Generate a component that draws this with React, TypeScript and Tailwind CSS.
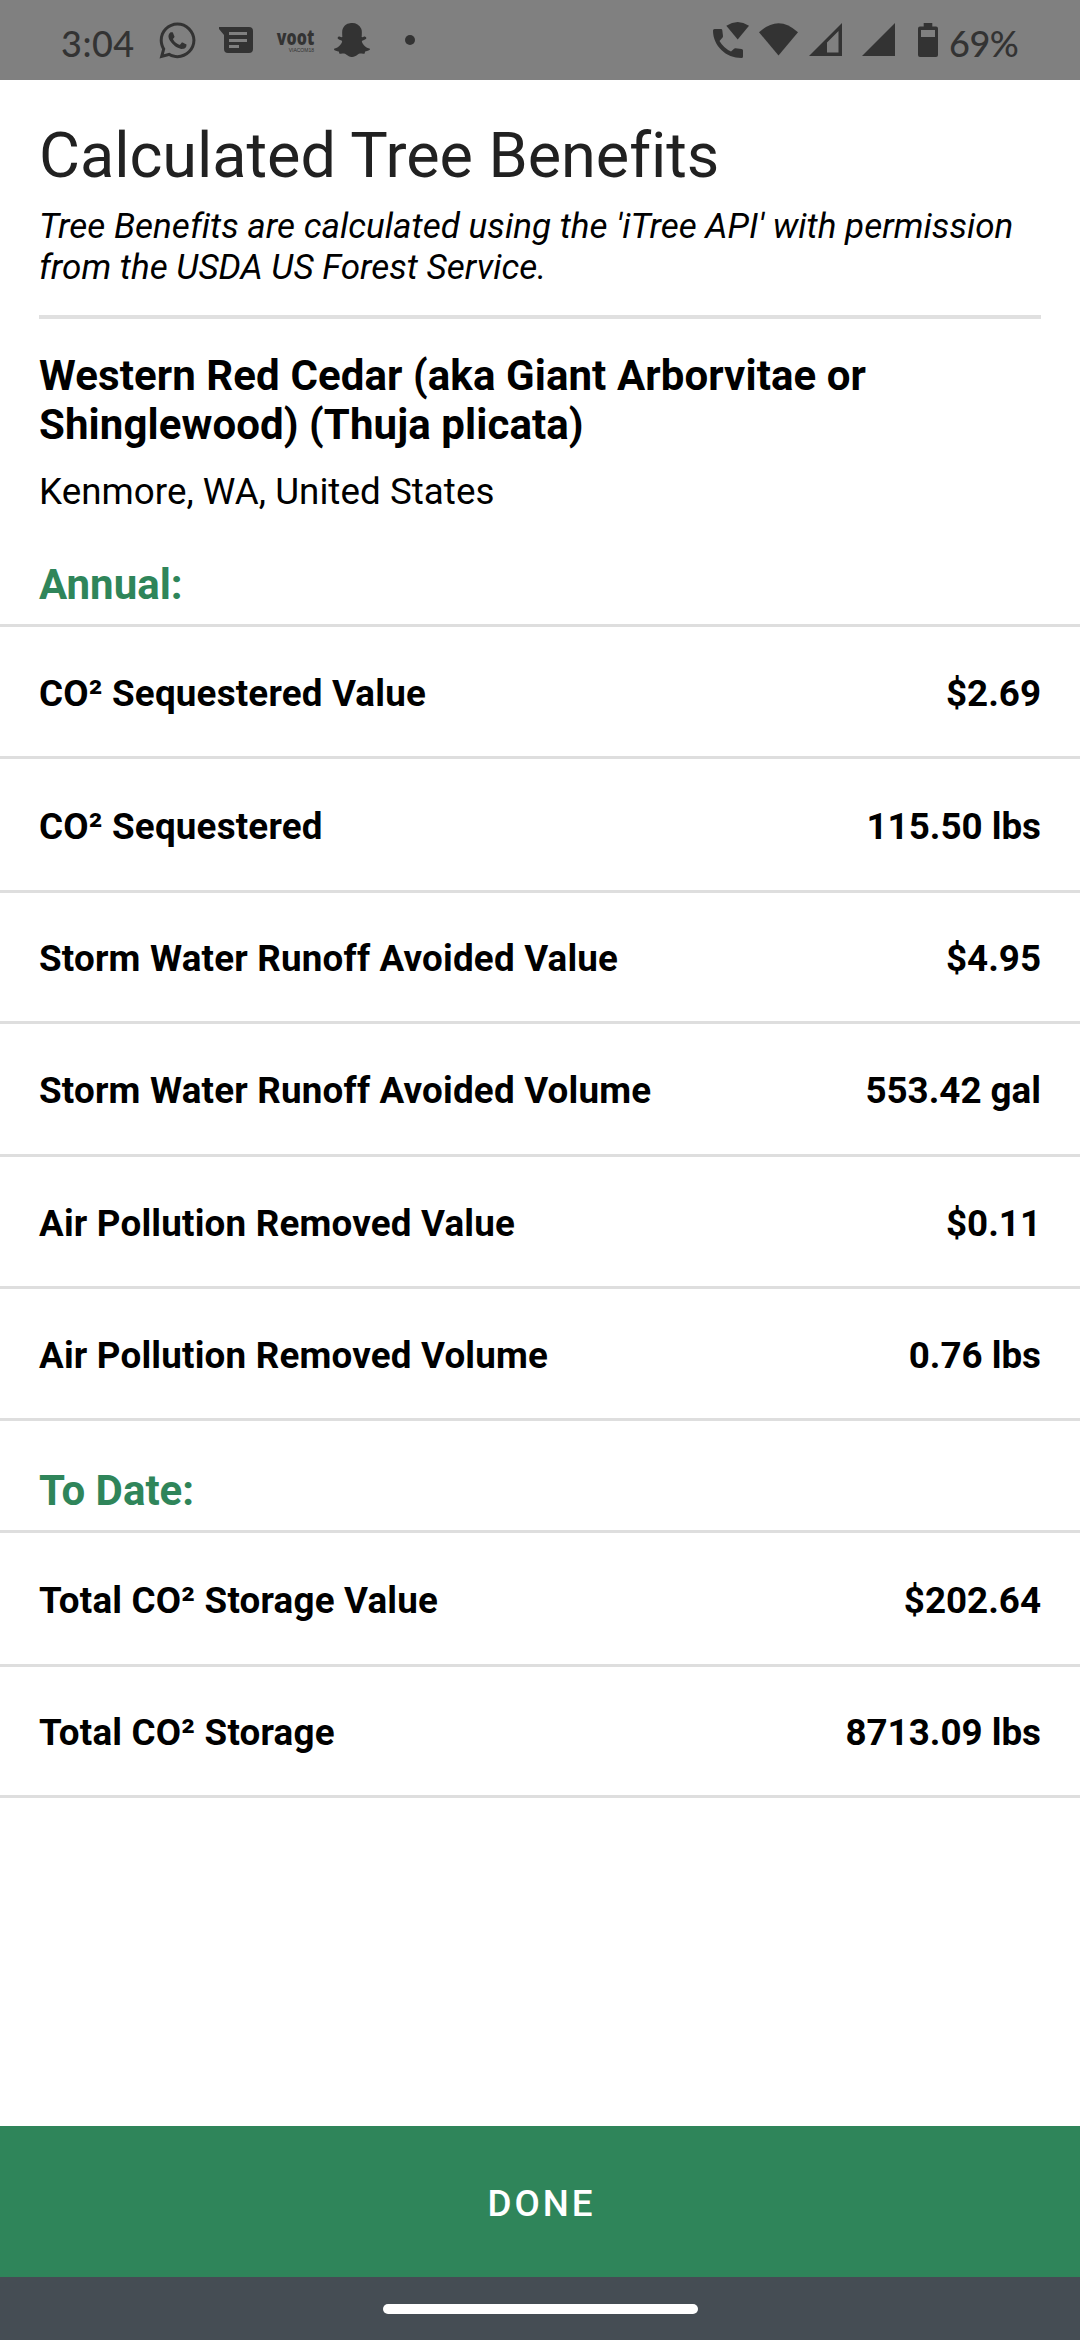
import { FaWhatsapp, FaSnapchatGhost } from "react-icons/fa";

type Row = { label: string; value: string; size: string };

const annual: Row[] = [
  { label: "CO² Sequestered Value", value: "$2.69", size: "h-[132px] pt-1" },
  { label: "CO² Sequestered", value: "115.50 lbs", size: "h-[134px] pt-1" },
  { label: "Storm Water Runoff Avoided Value", value: "$4.95", size: "h-[131px] pt-[3px]" },
  { label: "Storm Water Runoff Avoided Volume", value: "553.42 gal", size: "h-[133px] pt-[3px]" },
  { label: "Air Pollution Removed Value", value: "$0.11", size: "h-[132px] pt-1" },
  { label: "Air Pollution Removed Volume", value: "0.76 lbs", size: "h-[132px] pt-1" },
];

const toDate: Row[] = [
  { label: "Total CO² Storage Value", value: "$202.64", size: "h-[134px] pt-1" },
  { label: "Total CO² Storage", value: "8713.09 lbs", size: "h-[131px] pt-[3px]" },
];

function StatusBar() {
  return (
    <header className="flex h-20 shrink-0 items-center bg-[#808080] text-[#333333]">
      <span className="ml-[61px] w-[76px] pt-[5px] font-['Lato'] text-[36px] leading-none font-medium tracking-[0.5px] whitespace-nowrap">3:04</span>
      <FaWhatsapp className="ml-5 size-[41px]" />
      <svg className="ml-[21px] h-[27px] w-[34px]" viewBox="0 0 34 27" fill="currentColor">
        <path fillRule="evenodd" d="M0 0H30a4 4 0 0 1 4 4V22a4 4 0 0 1-4 4H9a4 4 0 0 1-4-4V8L0 2ZM10 5V8H28V5ZM10 12V15H28V12ZM10 18V21H20V18Z" />
      </svg>
      <div className="ml-[21px] flex w-10 flex-col items-end">
        <span className="inline-block origin-right scale-x-[0.76] font-['Open_Sans'] text-[21px] leading-[21px] font-extrabold">voot</span>
        <span className="font-['Liberation_Sans'] text-[5px] leading-[5px] whitespace-nowrap">VIACOM18</span>
      </div>
      <FaSnapchatGhost className="ml-5 size-9" />
      <span className="ml-[35px] size-2.5 rounded-full bg-[#333333]" />
      <div className="mr-[61px] ml-auto flex items-center">
        <svg className="h-9 w-9" viewBox="0 0 36 36" fill="currentColor">
          <path d="M1.5 7H8q1.200 0 1.300 1.200L10 14q.1 1-.6 1.700L6.500 19Q10.500 26 18 29.500L20.800 27q.7-.8 1.700-.7l6 .7q1.500.2 1.500 1.600V34.500q0 1.500-1.500 1.500C13 36 0 24 0 8.500Q0 7 1.500 7Z" />
          <path d="M13.300 3.700Q24.700-3.700 36 3.700L24.700 17.500Z" />
        </svg>
        <svg className="ml-2.5 h-9 w-[39px]" viewBox="0 0 39 36" fill="currentColor">
          <path d="M0 10.300Q19.500-8 39 10.300L19.500 33.500Z" />
        </svg>
        <svg className="ml-[11px] h-9 w-[33px]" viewBox="0 0 33 36" fill="currentColor">
          <path fillRule="evenodd" d="M0 34L33 1V34ZM18 20.500V30.500H29.500V9Z" />
        </svg>
        <svg className="ml-5 h-9 w-[33px]" viewBox="0 0 33 36" fill="currentColor">
          <path d="M0 34L33 1V34Z" />
        </svg>
        <svg className="ml-[23px] h-9 w-5" viewBox="0 0 20 36" fill="currentColor">
          <path fillRule="evenodd" d="M5.700 1H14.300V4.500H18a2 2 0 0 1 2 2V33a2 2 0 0 1-2 2H2a2 2 0 0 1-2-2V6.500a2 2 0 0 1 2-2H5.700ZM3 8V15H17V8Z" />
        </svg>
        <span className="ml-[11px] w-[70px] pt-[5px] font-['Lato'] text-[36px] leading-none font-medium tracking-[-0.5px] whitespace-nowrap">69%</span>
      </div>
    </header>
  );
}

function Section({ title, rows }: { title: string; rows: Row[] }) {
  return (
    <section>
      <h3 className="pl-[39px] text-[42px] leading-[49px] font-bold text-[#2f855a]">{title}</h3>
      <ul className="mt-[15px] border-t-[3px] border-[#dedede]">
        {rows.map((row) => (
          <li key={row.label} className={`flex items-center justify-between border-b-[3px] border-[#dedede] px-[39px] text-[36.75px] leading-[43px] font-bold ${row.size}`}>
            <span className="tracking-[0.2px]">{row.label}</span>
            <span>{row.value}</span>
          </li>
        ))}
      </ul>
    </section>
  );
}

export default function App() {
  return (
    <div className="flex h-[2340px] w-[1080px] flex-col bg-white font-['Roboto',sans-serif] text-black">
      <StatusBar />
      <main className="flex-1">
        <div className="px-[39px] pt-[39px]">
          <h1 className="text-[63px] leading-[74px] tracking-[-0.05px] text-[#212121]">Calculated Tree Benefits</h1>
          <p className="mt-[13px] text-[35px] leading-[41px] tracking-[0.03px] italic">Tree Benefits are calculated using the 'iTree API' with permission from the USDA US Forest Service.</p>
          <hr className="mt-[27px] border-t-4 border-[#e0e0e0]" />
          <h2 className="mt-[32px] text-[42px] leading-[49px] font-bold tracking-[0.09px]">Western Red Cedar (aka Giant Arborvitae or Shinglewood) (Thuja plicata)</h2>
          <p className="mt-[21px] mb-[47px] text-[36.75px] leading-[43px] tracking-[0.04px]">Kenmore, WA, United States</p>
        </div>
        <Section title="Annual:" rows={annual} />
        <div className="h-[45px]" />
        <Section title="To Date:" rows={toDate} />
      </main>
      <button className="h-[151px] bg-[#2f855a] pt-1 pl-[3px] text-[36.75px] leading-[43px] font-medium tracking-[3px] text-white">DONE</button>
      <footer className="flex h-[63px] items-center justify-center bg-[#454d54]">
        <span className="h-2.5 w-[315px] rounded-full bg-white" />
      </footer>
    </div>
  );
}
